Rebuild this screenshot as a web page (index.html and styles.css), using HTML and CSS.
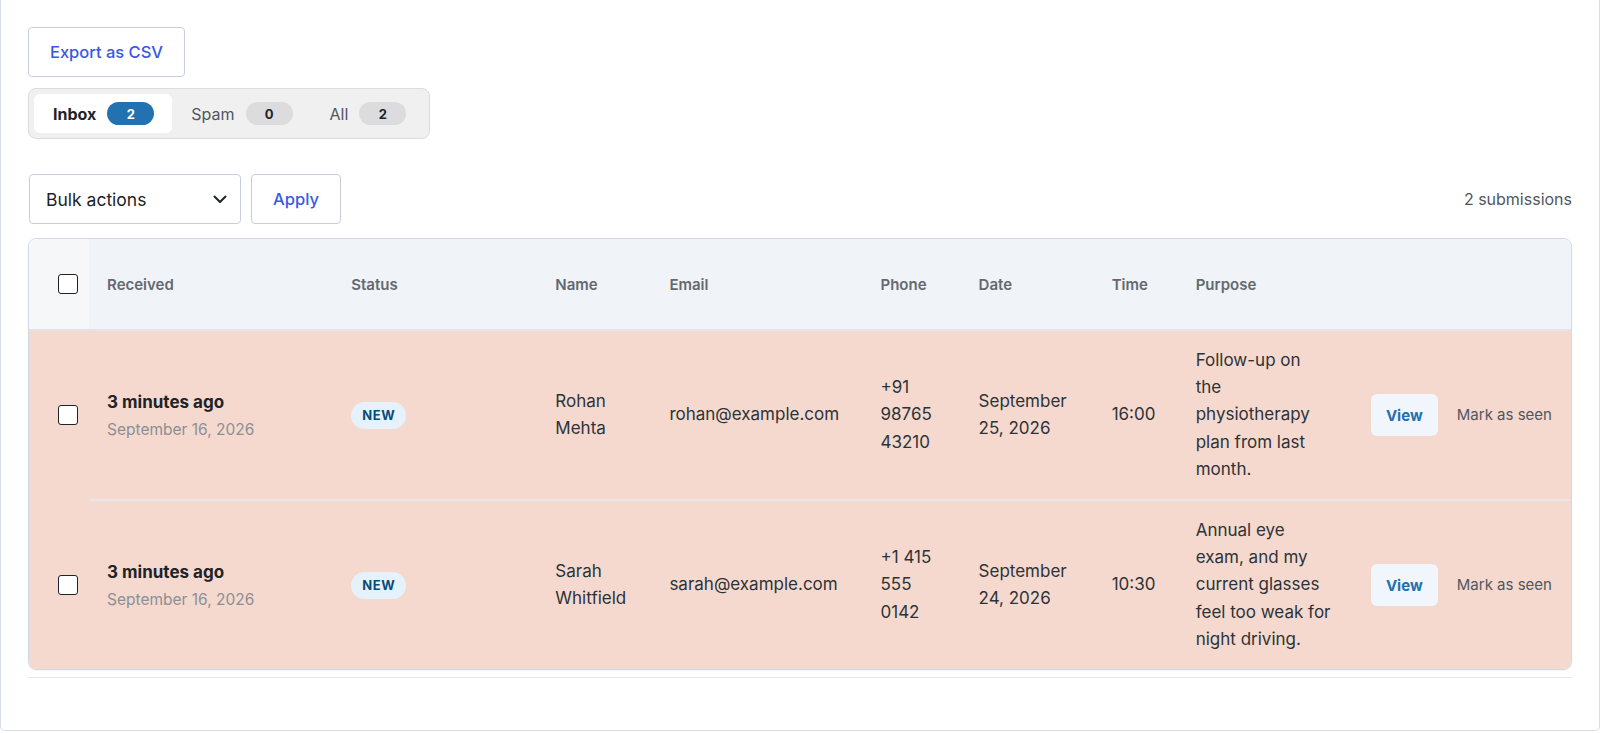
FILE: index.html
```html
<!DOCTYPE html>
<html lang="en">
<head>
<meta charset="utf-8">
<title>Submissions</title>
<link rel="stylesheet" href="styles.css">
</head>
<body>
<div class="panel">
  <div class="top-actions">
    <button class="btn btn-outline btn-export">Export as CSV</button>
  </div>

  <div class="tabs">
    <div class="tab tab-active"><span class="tab-label">Inbox</span><span class="count-badge badge-blue">2</span></div>
    <div class="tab"><span class="tab-label">Spam</span><span class="count-badge">0</span></div>
    <div class="tab"><span class="tab-label">All</span><span class="count-badge">2</span></div>
  </div>

  <div class="tablenav">
    <div class="bulk">
      <div class="select">
        <span>Bulk actions</span>
        <svg class="chevron" width="14" height="9" viewBox="0 0 14 9"><polyline points="1.5,1.5 7,7 12.5,1.5" fill="none" stroke="#1d2327" stroke-width="2" stroke-linecap="round" stroke-linejoin="round"/></svg>
      </div>
      <button class="btn btn-outline btn-apply">Apply</button>
    </div>
    <div class="total">2 submissions</div>
  </div>

  <div class="table-wrap">
    <table class="subs">
      <colgroup>
        <col class="c-cb"><col class="c-recv"><col class="c-status"><col class="c-name"><col class="c-email"><col class="c-phone"><col class="c-date"><col class="c-time"><col class="c-purpose"><col class="c-actions">
      </colgroup>
      <thead>
        <tr>
          <th class="cb"><span class="checkbox"></span></th>
          <th>Received</th>
          <th>Status</th>
          <th>Name</th>
          <th>Email</th>
          <th>Phone</th>
          <th>Date</th>
          <th>Time</th>
          <th>Purpose</th>
          <th></th>
        </tr>
      </thead>
      <tbody>
        <tr class="unread">
          <td class="cb"><span class="checkbox"></span></td>
          <td><div class="recv-title">3 minutes ago</div><div class="recv-date">September 16, 2026</div></td>
          <td><span class="status-badge">NEW</span></td>
          <td>Rohan Mehta</td>
          <td>rohan@example.com</td>
          <td>+91 98765 43210</td>
          <td>September 25, 2026</td>
          <td>16:00</td>
          <td><div class="purpose">Follow-up on the physiotherapy plan from last month.</div></td>
          <td><div class="row-actions"><button class="btn-view">View</button><span class="mark-seen">Mark as seen</span></div></td>
        </tr>
        <tr class="unread">
          <td class="cb"><span class="checkbox"></span></td>
          <td><div class="recv-title">3 minutes ago</div><div class="recv-date">September 16, 2026</div></td>
          <td><span class="status-badge">NEW</span></td>
          <td>Sarah Whitfield</td>
          <td>sarah@example.com</td>
          <td>+1 415 555 0142</td>
          <td>September 24, 2026</td>
          <td>10:30</td>
          <td><div class="purpose">Annual eye exam, and my current glasses feel too weak for night driving.</div></td>
          <td><div class="row-actions"><button class="btn-view">View</button><span class="mark-seen">Mark as seen</span></div></td>
        </tr>
      </tbody>
    </table>
  </div>
  <div class="footer-line"></div>
</div>
</body>
</html>
```

FILE: styles.css
```css
* { box-sizing: border-box; }

html, body {
  margin: 0;
  padding: 0;
  background: #ffffff;
  font-family: Inter, "Noto Sans", "Liberation Sans", sans-serif;
  color: #2c3338;
}

.panel {
  width: 1600px;
  height: 731px;
  border: 1px solid #d6dce8;
  border-top: none;
  border-radius: 0 0 5px 5px;
  padding: 27px 27px 0 27px;
}

.btn {
  font-family: inherit;
  background: #ffffff;
  cursor: pointer;
}

.btn-outline {
  border: 1px solid #c7cde0;
  border-radius: 4px;
  color: #3858e9;
  font-size: 16.5px;
  font-weight: 500;
  height: 50px;
}

.btn-export {
  width: 157px;
  padding: 0;
}

.tabs {
  margin-top: 11px;
  display: inline-flex;
  align-items: center;
  height: 51px;
  padding: 0 5px;
  background: #f0f0f1;
  border: 1px solid #dcdcde;
  border-radius: 8px;
}

.tab {
  display: flex;
  align-items: center;
  gap: 11px;
  height: 39px;
  padding: 0 18px 0 19px;
  border-radius: 6px;
  font-size: 16px;
  color: #50575e;
}

.tab-active {
  background: #ffffff;
  color: #1d2327;
  font-weight: 700;
}

.count-badge {
  display: inline-flex;
  align-items: center;
  justify-content: center;
  min-width: 47px;
  height: 23px;
  border-radius: 12px;
  background: #dcdcde;
  color: #1d2327;
  font-size: 13px;
  font-weight: 700;
}

.badge-blue {
  background: #2271b1;
  color: #ffffff;
}

.tablenav {
  margin-top: 35px;
  display: flex;
  align-items: center;
  justify-content: space-between;
}

.bulk {
  display: flex;
  gap: 10px;
  padding-left: 1px;
}

.select {
  width: 212px;
  height: 50px;
  border: 1px solid #c8cfdc;
  border-radius: 4px;
  display: flex;
  align-items: center;
  justify-content: space-between;
  padding: 0 13px 0 16px;
  font-size: 17.5px;
  color: #1d2327;
}

.btn-apply {
  width: 90px;
  padding: 0;
}

.total {
  font-size: 16px;
  color: #50575e;
}

.table-wrap {
  margin-top: 14px;
  border: 1px solid #d3d9e4;
  border-radius: 8px;
  overflow: hidden;
  box-shadow: 0 1px 1px rgba(0, 0, 0, 0.04);
}

.subs {
  width: 100%;
  border-collapse: separate;
  border-spacing: 0;
  table-layout: fixed;
}

.c-cb { width: 60px; }
.c-recv { width: 244px; }
.c-status { width: 204px; }
.c-name { width: 114px; }
.c-email { width: 211px; }
.c-phone { width: 98px; }
.c-date { width: 133px; }
.c-time { width: 84px; }
.c-purpose { width: 175px; }
.c-actions { width: 218px; }

.subs th {
  height: 92px;
  background: #f0f3f8;
  border-bottom: 2px solid #dfe4ec;
  text-align: left;
  font-size: 15px;
  font-weight: 600;
  color: #646970;
  padding: 0 18px;
}

.subs th.cb {
  background: #f6f7f9;
  padding: 0 0 0 29px;
}

.subs td {
  background: #f5d9cf;
  font-size: 17px;
  line-height: 27.2px;
  color: #2c3338;
  padding: 16px 18px;
  vertical-align: middle;
}

.subs tbody tr:first-child td {
  border-bottom: 2px solid #e3e6eb;
}

.subs tbody tr:first-child td.cb {
  border-bottom-color: #f5d9cf;
}

.subs td.cb {
  padding: 0 0 0 29px;
}

.checkbox {
  display: block;
  width: 20px;
  height: 20px;
  border: 1.5px solid #1d2327;
  border-radius: 3px;
  background: #ffffff;
}

.recv-title {
  font-size: 17px;
  font-weight: 700;
  color: #1d2327;
  line-height: 26px;
}

.recv-date {
  margin-top: 3px;
  font-size: 15.5px;
  line-height: 24px;
  color: #8c8f94;
}

.status-badge {
  display: inline-flex;
  align-items: center;
  justify-content: center;
  width: 55px;
  height: 27px;
  border-radius: 14px;
  background: #e6f2fb;
  color: #0a4b78;
  font-size: 13px;
  font-weight: 700;
  letter-spacing: 0.6px;
}

.purpose {
  width: 135px;
}

.row-actions {
  display: flex;
  align-items: center;
  gap: 19px;
}

.btn-view {
  font-family: inherit;
  width: 67px;
  height: 42px;
  border: none;
  border-radius: 6px;
  background: #f0f6fc;
  color: #2271b1;
  font-size: 15px;
  font-weight: 700;
  padding: 0;
}

.mark-seen {
  font-size: 15px;
  color: #50575e;
  white-space: nowrap;
}

.footer-line {
  margin-top: 7px;
  height: 1px;
  background: #e5e8ed;
}
```
